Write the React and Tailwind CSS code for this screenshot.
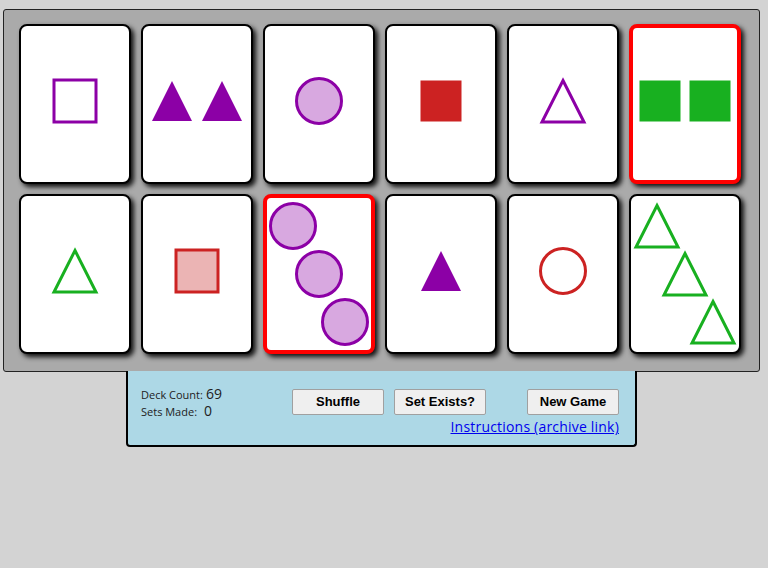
import React from "react";

const PURPLE = "#8c00a6";
const RED = "#cc2222";
const GREEN = "#18b020";

const cards = [
  { shape: "square", fill: "empty", color: PURPLE, count: 1 },
  { shape: "triangle", fill: "solid", color: PURPLE, count: 2 },
  { shape: "circle", fill: "shaded", color: PURPLE, count: 1 },
  { shape: "square", fill: "solid", color: RED, count: 1 },
  { shape: "triangle", fill: "empty", color: PURPLE, count: 1 },
  { shape: "square", fill: "solid", color: GREEN, count: 2, selected: true },
  { shape: "triangle", fill: "empty", color: GREEN, count: 1 },
  { shape: "square", fill: "shaded", color: RED, count: 1 },
  { shape: "circle", fill: "shaded", color: PURPLE, count: 3, selected: true },
  { shape: "triangle", fill: "solid", color: PURPLE, count: 1 },
  { shape: "circle", fill: "empty", color: RED, count: 1 },
  { shape: "triangle", fill: "empty", color: GREEN, count: 3 },
];

const shadeOf = (color) =>
  color === PURPLE ? "#d8a8e0" : color === RED ? "#ebb4b4" : "#a8e0aa";

const Shape = ({ shape, fill, color }) => {
  const f = fill === "solid" ? color : fill === "shaded" ? shadeOf(color) : "none";
  const solid = fill === "solid";
  return (
    <svg width="48" height="48" viewBox="0 0 48 48" className="block shrink-0">
      {shape === "square" &&
        (solid ? (
          <rect x="3.5" y="3.5" width="41" height="41" fill={color} />
        ) : (
          <rect x="3" y="3" width="42" height="42" fill={f} stroke={color} strokeWidth="3" />
        ))}
      {shape === "circle" && (
        <circle cx="24" cy="24" r="22.5" fill={f} stroke={color} strokeWidth="3" />
      )}
      {shape === "triangle" &&
        (solid ? (
          <polygon points="24,4 44,44 4,44" fill={color} />
        ) : (
          <polygon
            points="24,3.5 45,45 3,45"
            fill={f}
            stroke={color}
            strokeWidth="3"
          />
        ))}
    </svg>
  );
};

const Card = ({ card }) => {
  const border = card.selected ? "border-4 border-[#ff0000]" : "border-2 border-black";
  const items = Array.from({ length: card.count });
  return (
    <div
      className={`w-[112px] h-[160px] bg-white rounded-[8px] shadow-[3px_3px_5px_rgba(0,0,0,0.9)] ${border} flex`}
    >
      {card.count === 3 ? (
        <div className="flex-1 flex flex-col justify-center px-[2px]">
          {items.map((_, i) => (
            <div
              key={i}
              className={i === 0 ? "self-start" : i === 1 ? "self-center" : "self-end"}
            >
              <Shape {...card} />
            </div>
          ))}
        </div>
      ) : (
        <div className="flex-1 flex items-center justify-center gap-[2px] pb-[6px]">
          {items.map((_, i) => (
            <Shape key={i} {...card} />
          ))}
        </div>
      )}
    </div>
  );
};

export default function App() {
  return (
    <div
      className="min-h-[568px] w-full bg-[#d3d3d3] pt-[9px] pl-[3px]"
      style={{ fontFamily: '"DejaVu Sans", Verdana, sans-serif' }}
    >
      <div className="w-[757px] h-[363px] bg-[#aaaaaa] border border-[#222] rounded-[3px] pt-[14px] pl-[15px]">
        <div className="grid grid-cols-[repeat(6,112px)] gap-x-[10px] gap-y-[10px]">
          {cards.map((c, i) => (
            <Card key={i} card={c} />
          ))}
        </div>
      </div>
      <div className="ml-[123px] w-[511px] h-[76px] -mt-px bg-[#add8e6] border-2 border-t-0 border-black rounded-b-[4px] flex">
        <div
          className="pl-[13px] pt-[15px] text-[#222] whitespace-nowrap"
          style={{ fontFamily: '"Open Sans", sans-serif' }}
        >
          <div className="flex items-baseline h-[17px]">
            <span className="text-[11px] w-[65px]">Deck Count:</span>
            <span className="text-[14px] leading-[16px]">69</span>
          </div>
          <div className="flex items-baseline h-[17px]">
            <span className="text-[11px] w-[63px]">Sets Made:</span>
            <span className="text-[14px] leading-[16px]">0</span>
          </div>
        </div>
        <div className="flex-1 flex flex-col items-end pr-[16px] pt-[18px]">
          <div className="flex w-full pl-[70px]" style={{ fontFamily: '"Liberation Sans", Arial, sans-serif' }}>
            {["Shuffle", "Set Exists?"].map((t, i) => (
              <button
                key={t}
                className={`w-[92px] h-[26px] bg-[#efefef] border border-[#a0a0a0] rounded-[2px] text-[13px] font-bold text-black ${i ? "ml-[10px]" : ""}`}
              >
                {t}
              </button>
            ))}
            <button className="ml-auto w-[92px] h-[26px] bg-[#efefef] border border-[#a0a0a0] rounded-[2px] text-[13px] font-bold text-black">
              New Game
            </button>
          </div>
          <a
            href="#"
            className="mt-[3px] mr-0 text-[14px] leading-[18px] tracking-[0.2px] text-[#0000ee] underline"
            style={{ fontFamily: '"Open Sans", sans-serif' }}
          >
            Instructions (archive link)
          </a>
        </div>
      </div>
    </div>
  );
}
